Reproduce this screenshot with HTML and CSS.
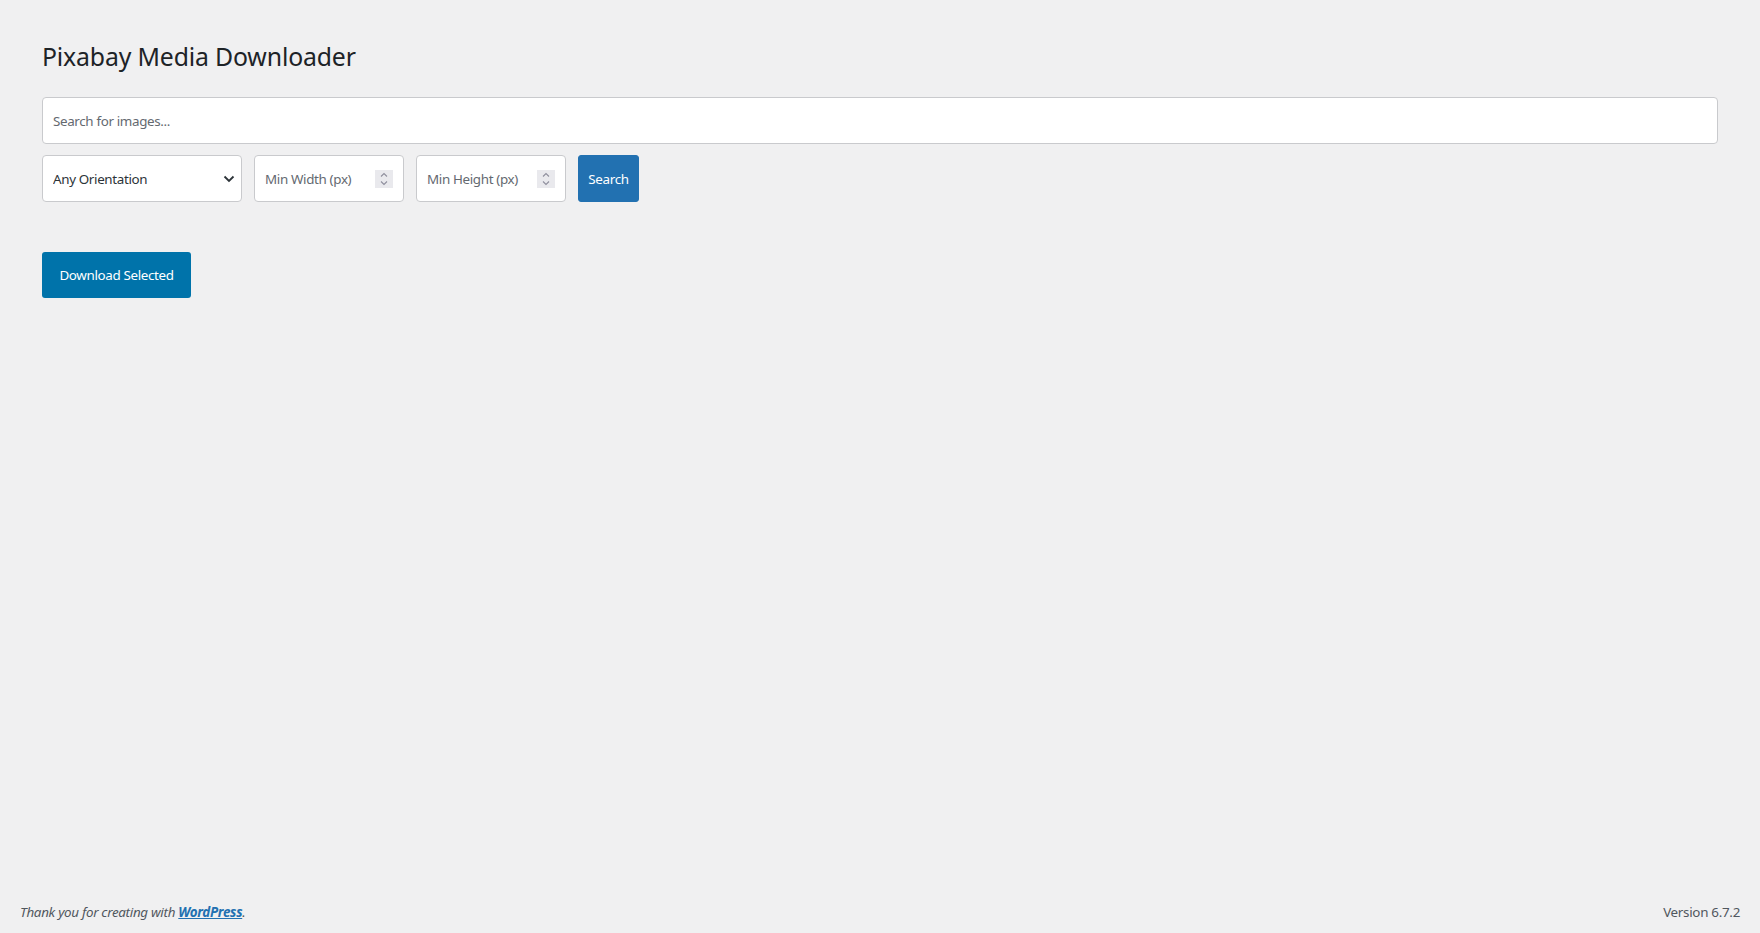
FILE: index.html
```html
<!DOCTYPE html>
<html lang="en">
<head>
  <meta charset="UTF-8">
  <title>Pixabay Media Downloader</title>
  <link rel="stylesheet" href="styles.css">
</head>
<body>

  <div class="wrap">
    <h1>Pixabay Media Downloader</h1>

    <!-- search form -->
    <div class="search-box">
      <input type="text" id="searchInput" class="search-input" placeholder="Search for images...">

      <div class="filter-row">
        <div class="select-field">
          <select id="orientation">
            <option value="all">Any Orientation</option>
            <option value="horizontal">Horizontal</option>
            <option value="vertical">Vertical</option>
          </select>
          <svg class="select-arrow" width="12" height="8" viewBox="0 0 12 8">
            <path d="M1.5 1.5 L6 6 L10.5 1.5" fill="none" stroke="#2c3338" stroke-width="1.8"/>
          </svg>
        </div>

        <div class="num-field">
          <input type="text" id="minWidth" placeholder="Min Width (px)">
          <span class="spin">
            <svg width="18" height="18" viewBox="0 0 18 18">
              <path d="M6 6.5 L9 3.5 L12 6.5" fill="none" stroke="#8f8f9d" stroke-width="1.1"/>
              <path d="M6 11.5 L9 14.5 L12 11.5" fill="none" stroke="#8f8f9d" stroke-width="1.1"/>
            </svg>
          </span>
        </div>

        <div class="num-field">
          <input type="text" id="minHeight" placeholder="Min Height (px)">
          <span class="spin">
            <svg width="18" height="18" viewBox="0 0 18 18">
              <path d="M6 6.5 L9 3.5 L12 6.5" fill="none" stroke="#8f8f9d" stroke-width="1.1"/>
              <path d="M6 11.5 L9 14.5 L12 11.5" fill="none" stroke="#8f8f9d" stroke-width="1.1"/>
            </svg>
          </span>
        </div>

        <button class="btn-search" id="searchBtn">Search</button>
      </div>
    </div>

    <div class="results" id="results"></div>

    <button class="btn-download" id="downloadBtn">Download Selected</button>
  </div>

  <div class="footer">
    <p class="footer-left">Thank you for creating with <a href="#">WordPress</a>.</p>
    <p class="footer-right">Version 6.7.2</p>
  </div>

</body>
</html>
```

FILE: styles.css
```css
html, body {
  height: 100%;
}

body {
  margin: 0;
  background: #f0f0f1;
  color: #3c434a;
  font-family: "Noto Sans", "Open Sans", sans-serif;
  font-size: 13.4px;
  letter-spacing: -0.35px;
  display: flex;
  flex-direction: column;
}

.wrap {
  flex: 1;
  padding: 0 42px;
}

h1 {
  margin: 40px 0 25px;
  font-size: 24.8px;
  font-weight: 400;
  letter-spacing: -0.15px;
  line-height: 1.3;
  color: #1d2327;
}

.search-input {
  display: block;
  box-sizing: border-box;
  width: 100%;
  height: 47px;
  padding: 0 10px;
  border: 1px solid #c9cacd;
  border-radius: 4px;
  background: #fff;
  font-family: inherit;
  font-size: 13.4px;
  letter-spacing: -0.35px;
  color: #2c3338;
  outline: none;
}

.search-input::placeholder,
.num-field input::placeholder {
  color: #646970;
}

.filter-row {
  display: flex;
  gap: 12px;
  margin-top: 11px;
}

.select-field,
.num-field {
  box-sizing: border-box;
  height: 47px;
  display: flex;
  align-items: center;
  background: #fff;
  border: 1px solid #c9cacd;
  border-radius: 4px;
}

.select-field {
  width: 200px;
  padding-right: 6px;
}

.select-field select {
  flex: 1;
  min-width: 0;
  height: 100%;
  padding: 0 0 0 10px;
  border: 0;
  background: transparent;
  appearance: none;
  -webkit-appearance: none;
  font-family: inherit;
  font-size: 13.4px;
  letter-spacing: -0.35px;
  color: #2c3338;
  outline: none;
}

.num-field {
  width: 150px;
  padding-right: 10px;
}

.num-field input {
  flex: 1;
  min-width: 0;
  height: 100%;
  padding: 0 0 0 10px;
  border: 0;
  background: transparent;
  font-family: inherit;
  font-size: 13.4px;
  letter-spacing: -0.35px;
  color: #2c3338;
  outline: none;
}

.spin {
  width: 18px;
  height: 18px;
  background: #e9e9ed;
  display: flex;
}

.btn-search {
  box-sizing: border-box;
  height: 47px;
  width: 61px;
  padding: 0;
  border: 1px solid #2271b1;
  border-radius: 3px;
  background: #2271b1;
  color: #fff;
  font-family: inherit;
  font-size: 13.4px;
  letter-spacing: -0.35px;
  cursor: pointer;
}

.results {
  height: 50px;
}

.btn-download {
  box-sizing: border-box;
  height: 46px;
  width: 149px;
  padding: 0;
  border: 0;
  border-radius: 3px;
  background: #0073aa;
  color: #fff;
  font-family: inherit;
  font-size: 13.4px;
  letter-spacing: -0.35px;
  cursor: pointer;
}

.footer {
  display: flex;
  justify-content: space-between;
  padding: 0 20px 8px;
  color: #50575e;
  letter-spacing: -0.3px;
}

.footer p {
  margin: 0;
  line-height: 25px;
}

.footer-left {
  font-style: italic;
}

.footer-left a {
  color: #2271b1;
  font-weight: 700;
}
```
